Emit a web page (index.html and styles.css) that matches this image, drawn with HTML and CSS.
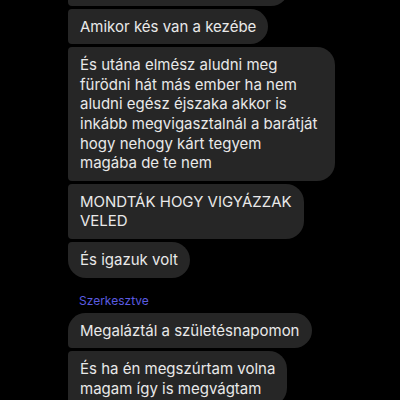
FILE: index.html
```html
<!DOCTYPE html>
<html lang="hu">
<head>
<meta charset="utf-8">
<link rel="stylesheet" href="styles.css">
</head>
<body>
<div class="chat">
  <div class="msg first">Ha valaki bánt engem akkor</div>
  <div class="msg">Amikor kés van a kezébe</div>
  <div class="msg wide">És utána elmész aludni meg<br>fürödni hát más ember ha nem<br>aludni egész éjszaka akkor is<br>inkább megvigasztalnál a barátját<br>hogy nehogy kárt tegyem<br>magába de te nem</div>
  <div class="msg">MONDTÁK HOGY VIGYÁZZAK<br>VELED</div>
  <div class="msg last">És igazuk volt</div>
  <div class="edited">Szerkesztve</div>
  <div class="msg first">Megaláztál a születésnapomon</div>
  <div class="msg">És ha én megszúrtam volna<br>magam így is megvágtam</div>
</div>
</body>
</html>
```
FILE: styles.css
```css
html, body {
  margin: 0;
  padding: 0;
  background: #000;
  height: 400px;
  overflow: hidden;
}
.chat {
  display: flex;
  flex-direction: column;
  align-items: flex-start;
  gap: 3px;
  padding-left: 68px;
  margin-top: -30px;
  font-family: Inter, "Noto Sans", sans-serif;
  font-size: 15px;
  line-height: 19.6px;
  color: #e9e9e9;
}
.msg {
  background: #262626;
  padding: 8px 12px;
  border-radius: 4px 18px 18px 4px;
  white-space: nowrap;
}
.msg.wide { min-width: 243px; }
.msg.first { border-top-left-radius: 18px; }
.msg.last { border-bottom-left-radius: 18px; }
.edited {
  font-size: 12px;
  line-height: 16px;
  color: #5b5be0;
  padding-left: 11px;
  margin-top: 12px;
  margin-bottom: 1px;
}
```
